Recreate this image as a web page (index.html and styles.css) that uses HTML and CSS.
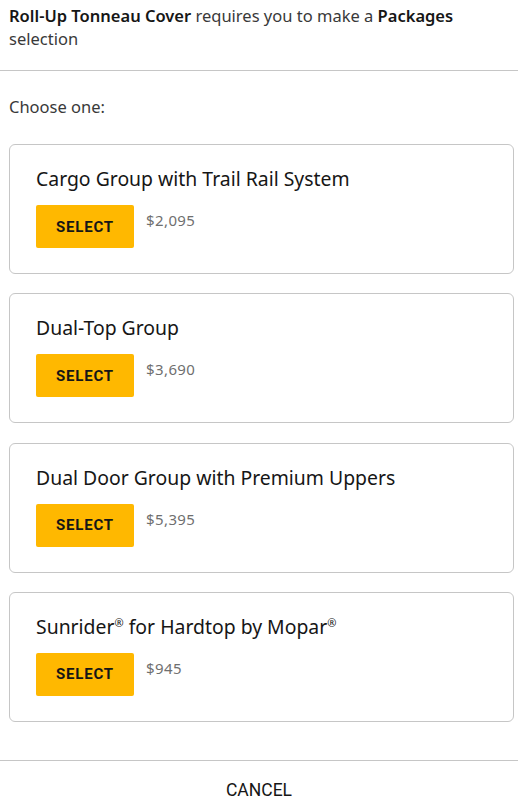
FILE: index.html
```html
<!DOCTYPE html>
<html lang="en">
<head>
<meta charset="utf-8">
<link rel="stylesheet" href="styles.css">
</head>
<body>
<div class="dialog">
  <div class="intro"><strong>Roll-Up Tonneau Cover</strong> requires you to make a <strong>Packages</strong> selection</div>
  <div class="choose">Choose one:</div>
  <div class="cards">
    <div class="card">
      <div class="title">Cargo Group with Trail Rail System</div>
      <div class="row"><button class="select">SELECT</button><span class="price">$2,095</span></div>
    </div>
    <div class="card">
      <div class="title">Dual-Top Group</div>
      <div class="row"><button class="select">SELECT</button><span class="price">$3,690</span></div>
    </div>
    <div class="card">
      <div class="title">Dual Door Group with Premium Uppers</div>
      <div class="row"><button class="select">SELECT</button><span class="price">$5,395</span></div>
    </div>
    <div class="card">
      <div class="title">Sunrider<sup>®</sup> for Hardtop by Mopar<sup>®</sup></div>
      <div class="row"><button class="select">SELECT</button><span class="price">$945</span></div>
    </div>
  </div>
  <div class="footer"><button class="cancel">CANCEL</button></div>
</div>
</body>
</html>
```
FILE: styles.css
```css
* { box-sizing: border-box; }
body {
  margin: 0;
  background: #fff;
  color: #161616;
  font-family: "Noto Sans", "Open Sans", sans-serif;
}
.intro {
  font-size: 16.5px;
  line-height: 23px;
  padding: 4px 9px 20px;
  border-bottom: 1px solid #c6c6c6;
  color: #393939;
}
.intro strong { font-weight: 600; color: #161616; }
.choose {
  font-size: 16.5px;
  line-height: 23px;
  color: #393939;
  margin-top: 24px;
  padding: 0 9px;
}
.cards {
  display: flex;
  flex-direction: column;
  gap: 19.33px;
  padding: 0 4px 0 9px;
  margin-top: 26px;
}
.card {
  border: 1px solid #c6c6c6;
  border-radius: 6px;
  padding: 20px 26px 25px;
}
.title {
  font-size: 19.4px;
  line-height: 28px;
  color: #161616;
}
.title sup {
  font-size: 11px;
  vertical-align: 7px;
  line-height: 0;
}
.row {
  display: flex;
  align-items: flex-start;
  gap: 12px;
  margin-top: 12px;
}
.select {
  width: 98px;
  height: 43px;
  border: 0;
  border-radius: 2px;
  background: #ffb800;
  color: #161616;
  font-family: Roboto, "Liberation Sans", sans-serif;
  font-weight: 700;
  font-size: 15px;
  letter-spacing: 0.8px;
  padding: 0;
}
.price {
  font-size: 15px;
  letter-spacing: 0.4px;
  line-height: 20px;
  color: #6f6f6f;
  margin-top: 5px;
}
.footer {
  margin-top: 38px;
  border-top: 1px solid #c6c6c6;
  display: flex;
  justify-content: center;
  padding-top: 19px;
}
.cancel {
  background: none;
  border: 0;
  padding: 0;
  font-family: Roboto, "Liberation Sans", sans-serif;
  font-size: 17.5px;
  line-height: 20px;
  color: #161616;
}
```
